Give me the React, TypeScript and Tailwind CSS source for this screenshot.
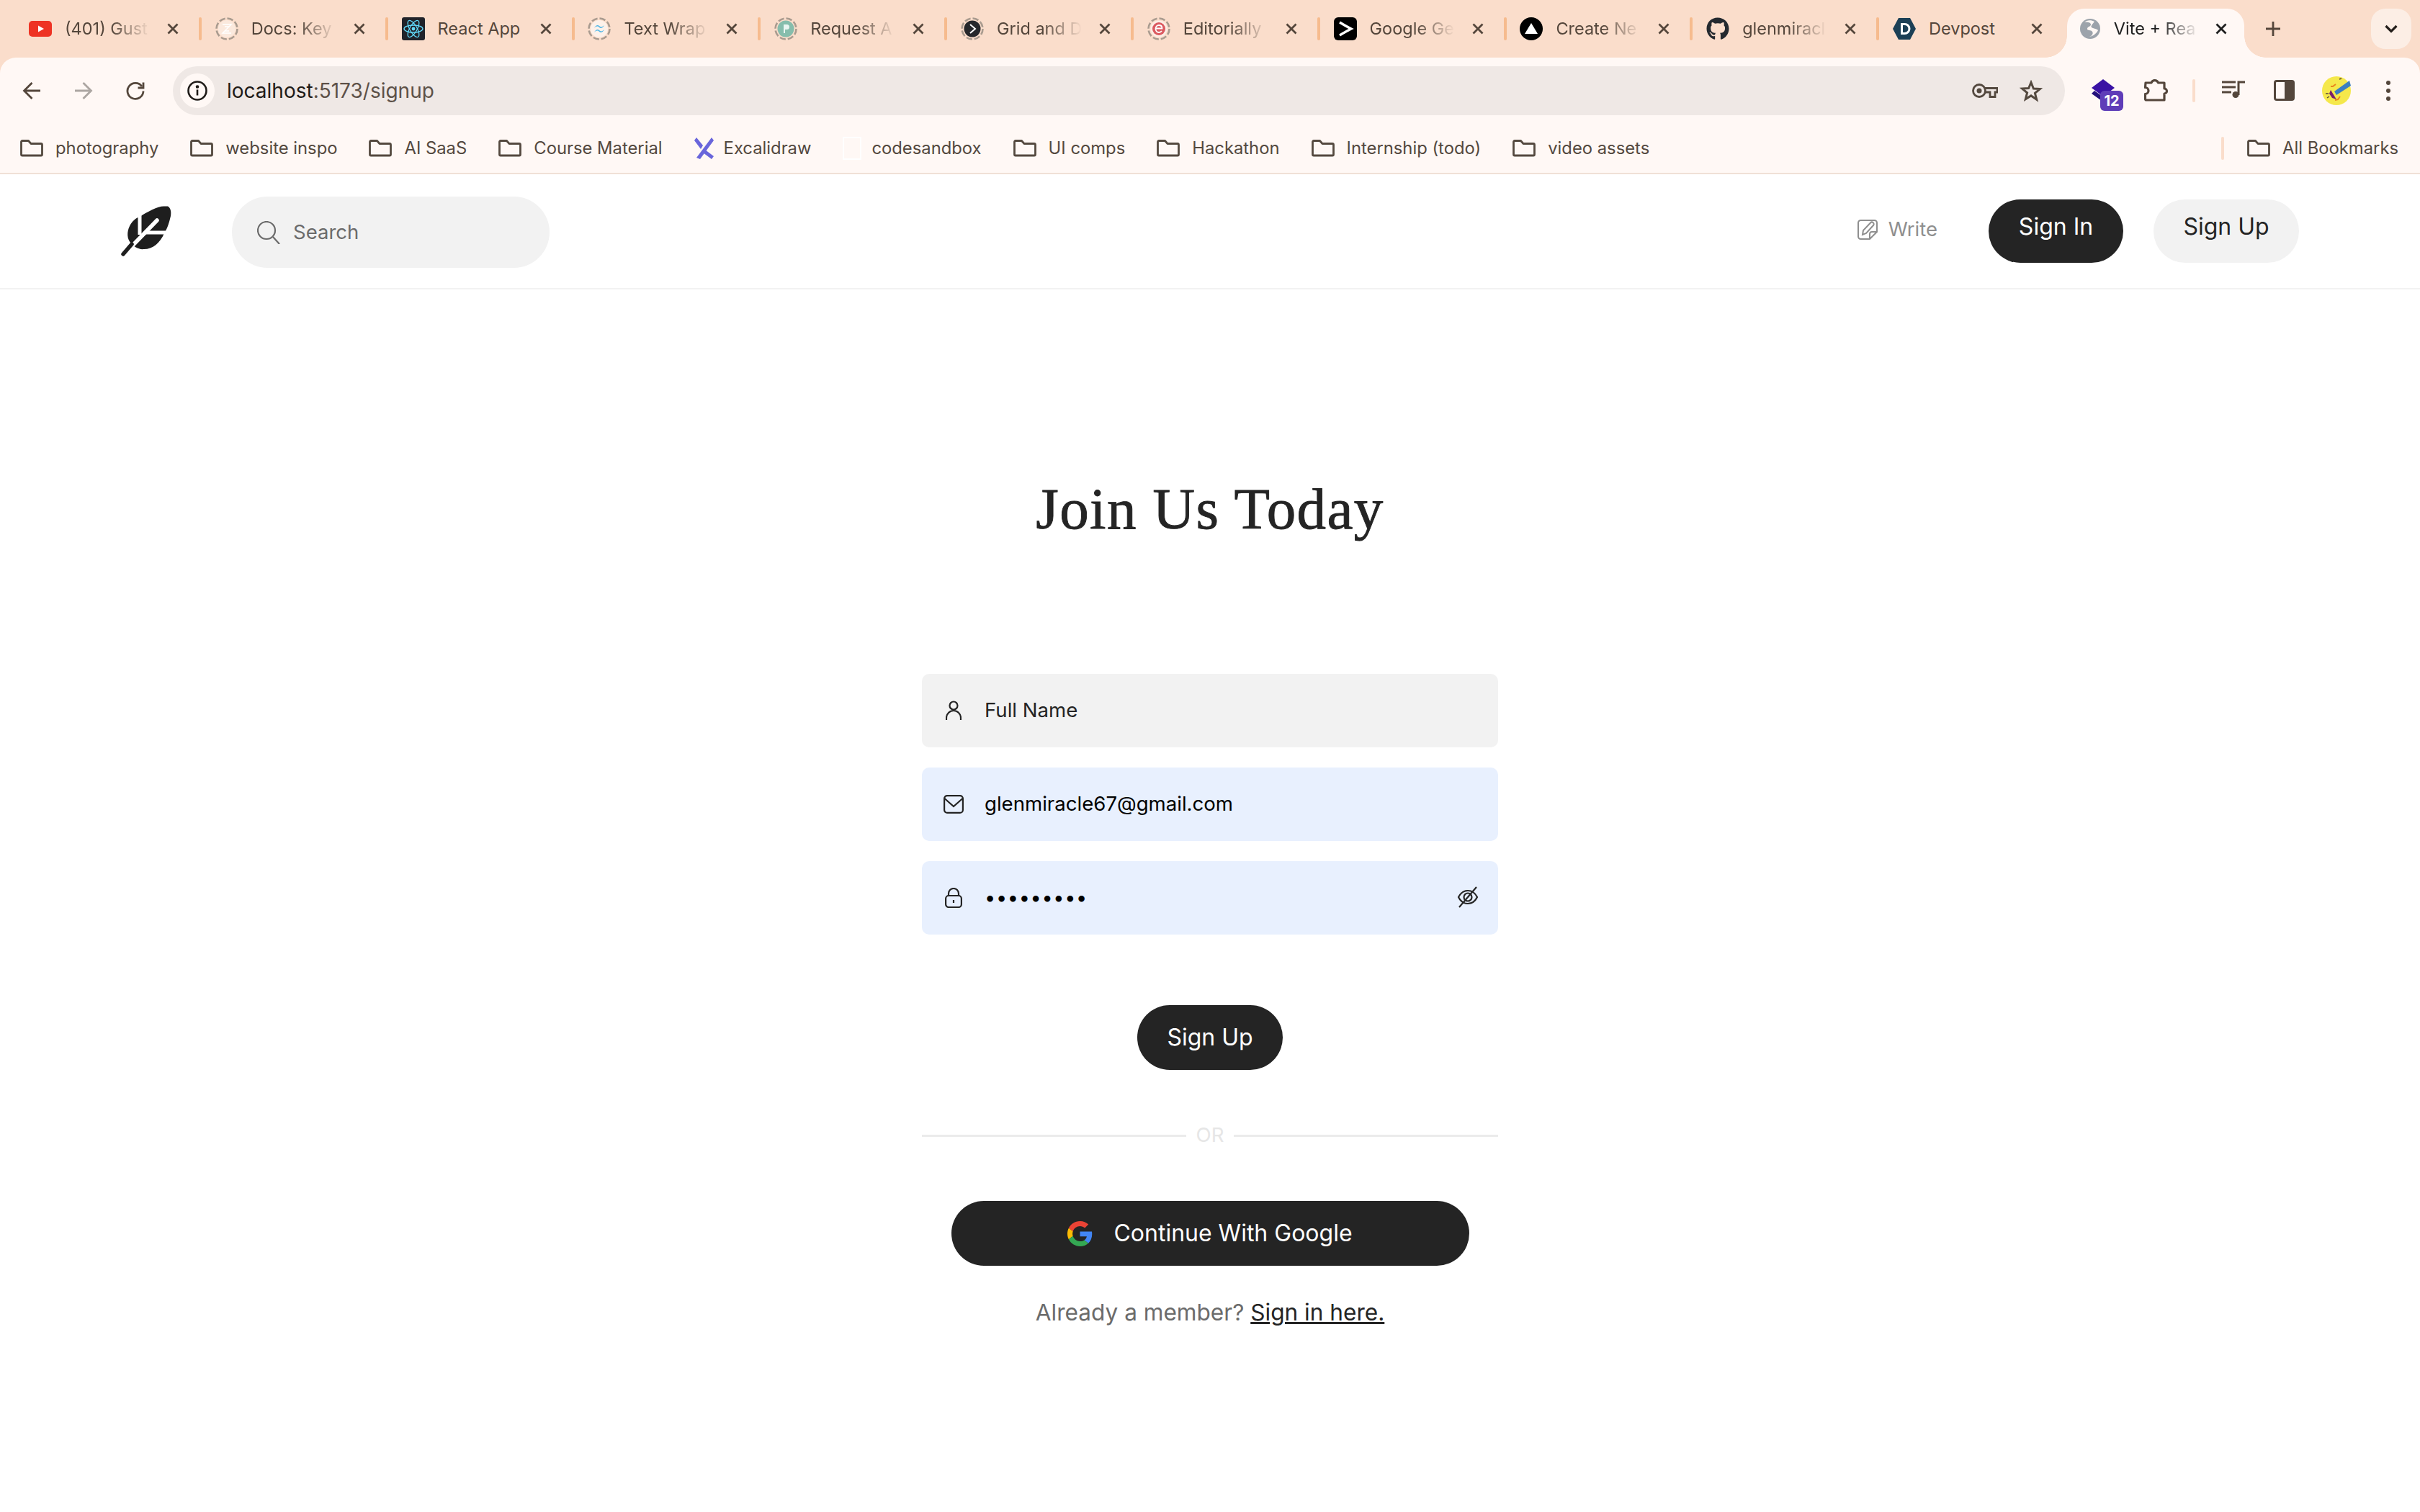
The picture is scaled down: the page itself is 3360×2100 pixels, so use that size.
import { type ReactNode } from "react";
import { FaGithub } from "react-icons/fa";

const BROWN = "#54463B";

const Ring = ({ children }: { children?: ReactNode }) => (
  <svg width="32" height="32" viewBox="0 0 32 32" fill="none">
    <circle cx="16" cy="16" r="14.5" stroke="#A99B8F" strokeWidth="2.6" strokeDasharray="8.400 3" />
    {children}
  </svg>
);

const favicons: Record<string, ReactNode> = {
  youtube: (
    <svg width="32" height="32" viewBox="0 0 32 32">
      <rect x="0" y="5" width="32" height="22" rx="5" fill="#EE3324" />
      <path d="M13 11.5 21 16l-8 4.5z" fill="#fff" />
    </svg>
  ),
  docs: (
    <Ring>
      <circle cx="16" cy="16" r="12" fill="#FBE9DD" />
      <path d="M10 10h12L10 22h12M13 13h6M13 19h6" stroke="#fff" strokeWidth="1.4" fill="none" />
    </Ring>
  ),
  react: (
    <svg width="32" height="32" viewBox="0 0 32 32" fill="none">
      <rect width="32" height="32" rx="3" fill="#20232A" />
      <g stroke="#61DAFB" strokeWidth="1.3">
        <ellipse cx="16" cy="16" rx="13" ry="5" />
        <ellipse cx="16" cy="16" rx="13" ry="5" transform="rotate(60 16 16)" />
        <ellipse cx="16" cy="16" rx="13" ry="5" transform="rotate(120 16 16)" />
      </g>
      <circle cx="16" cy="16" r="2.4" fill="#61DAFB" />
    </svg>
  ),
  tailwind: (
    <Ring>
      <circle cx="16" cy="16" r="12" fill="#FDF1E9" />
      <path d="M9 15c2-4 5-5 7-3s4 2 7-1c-2 4-5 5-7 3s-4-2-7 1zM9 21c2-4 5-5 7-3s4 2 7-1c-2 4-5 5-7 3s-4-2-7 1z" fill="#4DB6E8" />
    </Ring>
  ),
  request: (
    <Ring>
      <circle cx="16" cy="16" r="11.5" fill="#86BDAC" />
      <path d="M13 10h4.5a3.5 3.5 0 0 1 0 7H15v5h-2z" fill="#EAF5F1" />
    </Ring>
  ),
  grid: (
    <Ring>
      <circle cx="16" cy="16" r="11.5" fill="#25272B" />
      <path d="M13 10l7 6-7 6" stroke="#fff" strokeWidth="2" fill="none" />
    </Ring>
  ),
  editorially: (
    <Ring>
      <circle cx="16" cy="16" r="11.5" fill="#FCEEE6" />
      <circle cx="16" cy="16" r="9" fill="#DB5A60" />
      <path d="M11.5 15.5h9c0-3-2-4.5-4.5-4.5s-4.500 2-4.500 5 2 5 4.500 5c1.800 0 3-.7 4-2" stroke="#fff" strokeWidth="1.800" fill="none" />
    </Ring>
  ),
  gemini: (
    <svg width="32" height="32" viewBox="0 0 32 32" fill="none">
      <rect width="32" height="32" rx="6" fill="#000" />
      <path d="M8 7c5 3 10 6 16 9-6 3-11 6-16 9" stroke="#fff" strokeWidth="3.400" />
    </svg>
  ),
  vercel: (
    <svg width="32" height="32" viewBox="0 0 32 32">
      <circle cx="16" cy="16" r="16" fill="#000" />
      <path d="M16 8l9 15H7z" fill="#fff" />
    </svg>
  ),
  github: <FaGithub size={32} color="#24292F" />,
  devpost: (
    <svg width="32" height="32" viewBox="0 0 32 32">
      <path d="M8 1h16l8 15-8 15H8L0 16z" fill="#1B3F55" />
      <path d="M11 8h5.500a8 8 0 0 1 0 16H11zm3 3v10h2.500a5 5 0 0 0 0-10z" fill="#fff" fillRule="evenodd" />
    </svg>
  ),
  globe: (
    <svg width="28" height="28" viewBox="0 0 28 28">
      <circle cx="14" cy="14" r="14" fill="#9CA3AB" />
      <path d="M6 5c4-1 9 0 9 3s-5 3-5 6 5 1 7 4-1 6-4 7c3 0 10-4 12-9-3-3-7-2-9-4s2-5 4-8c-5-3-11-2-14 1z" fill="#FFF8F5" />
    </svg>
  ),
};

const tabs = [
  { icon: "youtube", title: "(401) Gust", fade: true },
  { icon: "docs", title: "Docs: Key", fade: true },
  { icon: "react", title: "React App", fade: false },
  { icon: "tailwind", title: "Text Wrap", fade: true },
  { icon: "request", title: "Request A", fade: true },
  { icon: "grid", title: "Grid and D", fade: true },
  { icon: "editorially", title: "Editorially", fade: true },
  { icon: "gemini", title: "Google Ge", fade: true },
  { icon: "vercel", title: "Create Ne", fade: true },
  { icon: "github", title: "glenmiracl", fade: true },
  { icon: "devpost", title: "Devpost", fade: false },
];

const bookmarks = ["photography", "website inspo", "AI SaaS", "Course Material", "Excalidraw", "codesandbox", "UI comps", "Hackathon", "Internship (todo)", "video assets"];

const CloseIcon = ({ color = BROWN }: { color?: string }) => (
  <svg width="16" height="16" viewBox="0 0 16 16" fill="none" stroke={color} strokeWidth="2.800">
    <path d="M1.500 1.500l13 13M14.500 1.500l-13 13" />
  </svg>
);

const FolderIcon = () => (
  <svg width="32" height="24" viewBox="0 0 32 24" fill="none" stroke="#54493F" strokeWidth="2.800" strokeLinejoin="round" className="shrink-0">
    <path d="M1.500 3a1.500 1.500 0 0 1 1.500-1.500h8.500l3.500 4h14a1.500 1.500 0 0 1 1.500 1.500v13.500a1.500 1.500 0 0 1-1.500 1.500H3a1.500 1.500 0 0 1-1.500-1.500z" />
  </svg>
);

const Logo = () => (
  <svg width="70" height="70" viewBox="18 16 70 70" fill="none">
    <path d="M83 16.500c4 2 5 8 4 13.500-2 9-5 18-9 24-6 14-16 22-28 22-8 1-14-4-18-8-6-6-6-16-2-24 3-6 8-11 12-12 13-8 28-16 36-15.500z" fill="#1E1E1E" />
    <path d="M44 27v29M52 53h38" stroke="#fff" strokeWidth="5" />
    <path d="M68 36 35 70" stroke="#fff" strokeWidth="5.500" strokeLinecap="round" />
    <path d="M21 83l12-14" stroke="#1E1E1E" strokeWidth="5.500" strokeLinecap="round" />
  </svg>
);

const App = () => {
  return (
    <div className="w-[3360px] h-[2100px] overflow-hidden bg-white font-['Inter',sans-serif] text-[#242424]">
      {/* tab strip */}
      <div className="bg-[#FADDCB]">
        <div className="h-[80px] flex items-start pl-[20px]">
          {tabs.map((tab, i) => (
            <div key={tab.title} className="w-[258.800px] h-[80px] flex items-center shrink-0 text-[23.500px] text-[#54463B] pb-[1px]">
              <div className="w-[32px] h-[32px] ml-[20px] shrink-0">{favicons[tab.icon]}</div>
              <div className={`w-[118px] ml-[18px] shrink-0 overflow-hidden whitespace-nowrap ${tab.fade ? "[mask-image:linear-gradient(to_right,black_55%,transparent_100%)]" : ""}`}>{tab.title}</div>
              <div className="ml-[24px] shrink-0"><CloseIcon /></div>
              {i < tabs.length - 1 && <div className="ml-[28px] w-[4px] h-[32px] rounded-sm bg-[#F6BB8E] shrink-0" />}
            </div>
          ))}
          {/* active tab */}
          <div className="relative w-[246px] h-[68px] mt-[12px] ml-[3px] rounded-t-[24px] bg-[#FFF8F5] flex items-center text-[23.500px] text-[#1F1F1F] shrink-0 pb-[12px]">
            <span className="absolute bottom-0 -left-[30px] w-[30px] h-[30px] bg-[radial-gradient(circle_at_0_0,transparent_29.500px,#FFF8F5_30px)]" />
            <span className="absolute bottom-0 -right-[30px] w-[30px] h-[30px] bg-[radial-gradient(circle_at_100%_0,transparent_29.500px,#FFF8F5_30px)]" />
            <div className="ml-[18px] shrink-0 h-[28px]">{favicons.globe}</div>
            <div className="w-[118px] ml-[19px] overflow-hidden whitespace-nowrap [mask-image:linear-gradient(to_right,black_55%,transparent_100%)]">Vite + Rea</div>
            <div className="ml-[23px] shrink-0"><CloseIcon color="#1F1F1F" /></div>
          </div>
          <svg width="20" height="20" viewBox="0 0 20 20" className="mt-[30px] ml-[30px] shrink-0" stroke={BROWN} strokeWidth="2.800">
            <path d="M10 0v20M0 10h20" />
          </svg>
          <div className="w-[56px] h-[56px] mt-[12px] ml-[126px] rounded-[20px] bg-[#FCEEE5] flex items-center justify-center shrink-0">
            <svg width="18" height="12" viewBox="0 0 18 12" fill="none" stroke="#241F1B" strokeWidth="3.200">
              <path d="M1.500 2 9 9.500 16.500 2" />
            </svg>
          </div>
        </div>

        {/* toolbar */}
        <div className="bg-[#FFF8F5] rounded-t-[22px]">
          <div className="h-[80px] flex items-start pt-[12px] pl-[8px]">
            <div className="w-[72px] h-[68px] flex items-center justify-center">
              <svg width="26" height="26" viewBox="0 0 26 26" fill="none" stroke={BROWN} strokeWidth="2.800"><path d="M25 13H3M13.500 2 2.500 13l11 11" /></svg>
            </div>
            <div className="w-[72px] h-[68px] flex items-center justify-center">
              <svg width="26" height="26" viewBox="0 0 26 26" fill="none" stroke="#ACA6A2" strokeWidth="2.800"><path d="M1 13h22M12.500 2l11 11-11 11" /></svg>
            </div>
            <div className="w-[72px] h-[68px] flex items-center justify-center">
              <svg width="26" height="26" viewBox="0 0 26 26" fill="none" stroke={BROWN} strokeWidth="2.800"><path d="M22 7a11 11 0 1 0 2 6.500" /><path d="M24 1.500V9h-7.500" /></svg>
            </div>
            <div className="ml-[16px] w-[2627px] h-[68px] rounded-full bg-[#EFE8E5] flex items-center pl-[10px] shrink-0">
              <div className="w-[48px] h-[48px] rounded-full bg-[#FFF8F5] flex items-center justify-center shrink-0">
                <svg width="28" height="28" viewBox="0 0 28 28" fill="none" stroke="#1F1B18" strokeWidth="2.600">
                  <circle cx="14" cy="14" r="12.500" />
                  <path d="M14 12.500v8" />
                  <circle cx="14" cy="8.500" r="1" fill="#1F1B18" />
                </svg>
              </div>
              <div className="ml-[17px] text-[28px] text-[#5D5148]"><span className="text-[#1F1B18]">localhost</span>:5173/signup</div>
              <div className="ml-auto flex items-center gap-[30px] pr-[31px]">
                <svg width="36" height="20" viewBox="0 0 36 20" fill="none" stroke="#54493F" strokeWidth="2.800">
                  <circle cx="10" cy="10" r="8.500" />
                  <circle cx="10" cy="10" r="3.500" fill="#54493F" stroke="none" />
                  <path d="M18 6.500h17V12h-3v6.500h-7V12h-7" />
                </svg>
                <svg width="32" height="31" viewBox="0 0 32 31" fill="none" stroke="#54493F" strokeWidth="3">
                  <path d="M16 3.500l3.400 8.500 9 .6-7 5.800 2.300 8.800L16 21.900 8.300 26.700l2.300-8.800-7-5.800 9-.6z" />
                </svg>
              </div>
            </div>
            <div className="ml-[37px] relative w-[44px] h-[48px] mt-[6px] shrink-0">
              <svg width="32" height="30" viewBox="0 0 32 30" className="absolute left-0 top-[12px]" fill="#3A12A4">
                <path d="M16 0l16 12-16 12L0 12z" />
                <path d="M4 16l14 10-4 4L0 20z" fill="#23107A" />
              </svg>
              <div className="absolute left-[12px] top-[28px] w-[32px] h-[28px] rounded-[6px] bg-[#5F3DB8] text-white text-[20px] font-bold leading-[28px] text-center">12</div>
            </div>
            <svg width="34" height="33" viewBox="0 0 34 33" className="ml-[29px] mt-[16px] shrink-0" fill="none" stroke="#54463B" strokeWidth="3.200" strokeLinejoin="round">
              <path d="M2 7h8a5 5 0 0 1 9.500 0H28v8a3.500 3.500 0 0 1 0 7v9H3a1.500 1.500 0 0 1-1.500-1.500v-7a4.500 4.500 0 0 0 0-9z" />
            </svg>
            <div className="ml-[33px] mt-[18px] w-[4px] h-[32px] rounded-sm bg-[#FADDCB] shrink-0" />
            <svg width="32" height="24" viewBox="0 0 32 24" className="ml-[37px] mt-[20px] shrink-0" fill="none" stroke="#54463B" strokeWidth="3">
              <path d="M0 2h19M0 9h19M0 16h13M23 20V2h9" />
              <circle cx="19" cy="19.500" r="4.500" fill="#54463B" stroke="none" />
            </svg>
            <svg width="29" height="29" viewBox="0 0 29 29" className="ml-[40px] mt-[19px] shrink-0" fill="none">
              <rect x="1.500" y="1.500" width="26" height="26" rx="2.500" stroke="#54463B" strokeWidth="3" />
              <rect x="15" y="1" width="13" height="27" rx="2" fill="#54463B" />
            </svg>
            <svg width="40" height="40" viewBox="0 0 40 40" className="ml-[38px] mt-[14px] shrink-0">
              <circle cx="20" cy="20" r="20" fill="#F5E84B" />
              <path d="M38 6l2 7-20 13-3-5z" fill="#3C7FC0" />
              <path d="M12 19l8 13-6-2-4-6z" fill="#7A1E6C" />
              <path d="M12 14h3l4-3M18 33l4-1 3-4" stroke="#E8861C" strokeWidth="2" fill="none" />
              <path d="M24 4l3-1M10 28l-3 2M9 24H5" stroke="#54463B" strokeWidth="1.500" />
            </svg>
            <div className="ml-[49px] mt-[20px] w-[6px] flex flex-col gap-[5px] shrink-0">
              <span className="w-[6px] h-[6px] rounded-full bg-[#54463B]" />
              <span className="w-[6px] h-[6px] rounded-full bg-[#54463B]" />
              <span className="w-[6px] h-[6px] rounded-full bg-[#54463B]" />
            </div>
          </div>

          {/* bookmarks */}
          <div className="h-[80px] flex items-center pl-[28px] pt-[12px] text-[23.800px] text-[#54493F]">
            <div className="flex items-center gap-[44px]">
              {bookmarks.map((name) => (
                <div key={name} className={`flex items-center whitespace-nowrap ${name === "Excalidraw" || name === "codesandbox" ? "gap-[14px]" : "gap-[17px]"}`}>
                  {name === "Excalidraw" ? (
                    <svg width="27" height="30" viewBox="0 0 27 30" className="shrink-0" fill="#6965DB">
                      <path d="M3 0l9 11-3 5L0 4zM24 0l3 4L8 30l-5-2zM15 17l12 9-3 4-12-9z" />
                    </svg>
                  ) : name === "codesandbox" ? (
                    <div className="w-[26px] h-[32px] border-[2px] border-white shrink-0" />
                  ) : (
                    <FolderIcon />
                  )}
                  {name}
                </div>
              ))}
            </div>
            <div className="ml-auto w-[4px] h-[32px] rounded-sm bg-[#FADDCB]" />
            <div className="ml-[32px] mr-[30px] flex items-center gap-[17px]"><FolderIcon />All Bookmarks</div>
          </div>
        </div>
      </div>

      {/* app nav */}
      <nav className="h-[162px] border-t-2 border-b-2 border-t-[#F0E0D6] border-b-[#F2F2F2] flex items-center px-[168px]">
        <Logo />
        <div className="ml-[84px] w-[441px] h-[99px] rounded-full bg-[#F2F2F2] flex items-center pl-[35px] gap-[18px] text-[#6B6B6B] text-[27.500px] mt-[3px]">
          <svg width="32" height="32" viewBox="0 0 32 32" fill="none" stroke="#6B6B6B" strokeWidth="2.200">
            <circle cx="13" cy="13" r="12" />
            <path d="M22 22l9 10" />
          </svg>
          Search
        </div>
        <div className="ml-auto flex items-center gap-[15px] text-[#8F8F8F] text-[27.500px] mb-[4px]">
          <svg width="28" height="28" viewBox="0 0 28 28" fill="none" stroke="#8F8F8F" strokeWidth="2">
            <path d="M27 17V4.500A3.500 3.500 0 0 0 23.500 1H4.500A3.500 3.500 0 0 0 1 4.500v19A3.500 3.500 0 0 0 4.500 27H17z" />
            <path d="M27 17h-7a3 3 0 0 0-3 3v7" />
            <path d="M7 21l1-6L18 4.500a2.500 2.500 0 0 1 4 3.500L12 19z" />
          </svg>
          Write
        </div>
        <button className="ml-[71px] w-[187px] h-[88px] rounded-full bg-[#242424] text-white text-[32px] pb-[12px]">Sign In</button>
        <button className="ml-[42px] w-[202px] h-[88px] rounded-full bg-[#F2F2F2] text-[#242424] text-[32px] pb-[12px]">Sign Up</button>
      </nav>

      {/* signup form */}
      <main className="flex flex-col items-center">
        <h1 className="mt-[255px] h-[100px] leading-[100px] text-[81px] tracking-[1.400px] font-['Liberation_Serif',serif] [-webkit-text-stroke:0.9px_#242424]">Join Us Today</h1>

        <div className="mt-[179px] w-[800px] flex flex-col gap-[28px] text-[27.600px]">
          <div className="h-[102px] rounded-[10px] bg-[#F2F2F2] flex items-center">
            <div className="w-[87px] flex justify-center shrink-0">
              <svg width="22" height="28" viewBox="0 0 22 28" fill="none" stroke="#242424" strokeWidth="2.200">
                <circle cx="11" cy="7" r="5.500" />
                <path d="M1 27v-3a10 10 0 0 1 20 0v3" />
              </svg>
            </div>
            Full Name
          </div>
          <div className="h-[102px] rounded-[10px] bg-[#E8F0FE] flex items-center text-black">
            <div className="w-[87px] flex justify-center shrink-0">
              <svg width="28" height="26" viewBox="0 0 28 26" fill="none" stroke="#242424" strokeWidth="2.200">
                <rect x="1.100" y="1.100" width="25.800" height="23.800" rx="4" />
                <path d="M1.500 5 14 16 26.500 5" />
              </svg>
            </div>
            glenmiracle67@gmail.com
          </div>
          <div className="h-[102px] rounded-[10px] bg-[#E8F0FE] flex items-center text-black">
            <div className="w-[87px] flex justify-center shrink-0">
              <svg width="24" height="28" viewBox="0 0 24 28" fill="none" stroke="#242424" strokeWidth="2.200">
                <rect x="1.100" y="11" width="21.800" height="16" rx="4" />
                <path d="M5 11V8a7 7 0 0 1 14 0v3M12 17v4" />
              </svg>
            </div>
            <span className="text-[27px] tracking-[0.700px]">•••••••••</span>
            <svg width="30" height="30" viewBox="0 0 30 30" className="ml-auto mr-[27px] mb-[2px]" fill="none" stroke="#242424" strokeWidth="2.200">
              <path d="M2 15c3-6 8-9 13-9s10 3 13 9c-3 6-8 9-13 9s-10-3-13-9z" />
              <circle cx="15" cy="15" r="5.500" />
              <path d="M3 29 27 1" />
            </svg>
          </div>
        </div>

        <button className="mt-[98px] w-[202px] h-[90px] rounded-full bg-[#242424] text-white text-[32px]">Sign Up</button>

        <div className="mt-[71px] w-[800px] h-[40px] flex items-center text-[#E6E6E6] text-[27.600px]">
          <div className="flex-1 h-[3px] bg-[#EBEBEB]" />
          <span className="mx-[14px]">OR</span>
          <div className="flex-1 h-[3px] bg-[#EBEBEB]" />
        </div>

        <button className="mt-[71px] w-[719px] h-[90px] rounded-full bg-[#242424] text-white text-[32px] flex items-center justify-center gap-[29px]">
          <svg width="35" height="35" viewBox="0 0 48 48">
            <path fill="#EA4335" d="M24 9.500c3.540 0 6.710 1.220 9.210 3.600l6.850-6.850C35.900 2.380 30.470 0 24 0 14.620 0 6.510 5.380 2.560 13.220l7.980 6.190C12.430 13.720 17.740 9.500 24 9.500z" />
            <path fill="#4285F4" d="M46.980 24.550c0-1.570-.15-3.090-.38-4.550H24v9.020h12.940c-.58 2.960-2.260 5.480-4.780 7.180l7.730 6c4.510-4.180 7.090-10.360 7.090-17.650z" />
            <path fill="#FBBC05" d="M10.530 28.590c-.48-1.450-.76-2.990-.76-4.590s.27-3.140.76-4.590l-7.980-6.190C.92 16.460 0 20.120 0 24c0 3.880.92 7.540 2.560 10.780l7.970-6.190z" />
            <path fill="#34A853" d="M24 48c6.480 0 11.930-2.130 15.890-5.810l-7.730-6c-2.150 1.450-4.920 2.300-8.160 2.300-6.260 0-11.570-4.220-13.470-9.910l-7.980 6.190C6.510 42.620 14.620 48 24 48z" />
          </svg>
          Continue With Google
        </button>

        <p className="mt-[45px] h-[40px] leading-[40px] text-[31.600px] text-[#6B6B6B]">
          Already a member? <a className="text-[#242424] underline">Sign in here.</a>
        </p>
      </main>
    </div>
  );
};

export default App;
